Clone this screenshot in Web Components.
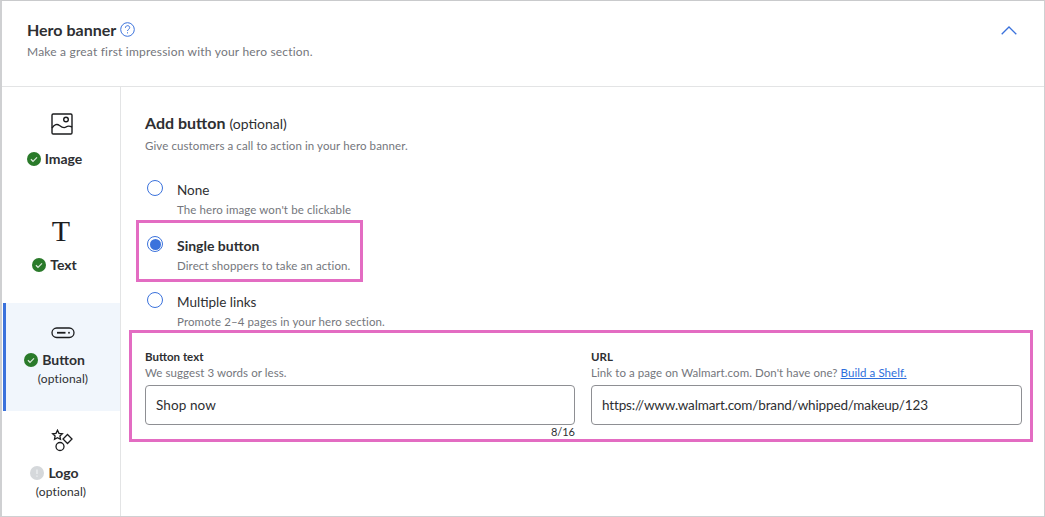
<!DOCTYPE html>
<html><head><meta charset="utf-8"><title>Hero banner</title>
<style>
html,body{margin:0;padding:0;background:#fff}
body{font-family:Lato,"Liberation Sans",sans-serif;color:#2e2f32}
</style></head><body>
<hero-panel>
  <side-tab slot="tabs" label="Image" status="ok" pt="21" gap="10" nudge="2" icon="image"></side-tab>
  <side-tab slot="tabs" label="Text" status="ok" pt="20" gap="9" nudge="4" icon="text"></side-tab>
  <side-tab slot="tabs" label="Button" sub="(optional)" status="ok" pt="14" gap="2" nudge="0" icon="button" active></side-tab>
  <side-tab slot="tabs" label="Logo" sub="(optional)" status="todo" pt="14" gap="7" nudge="2" subnudge="4" icon="logo"></side-tab>
  <radio-option label="None" hint="The hero image won't be clickable"></radio-option>
  <radio-option label="Single button" hint="Direct shoppers to take an action." checked></radio-option>
  <radio-option label="Multiple links" hint="Promote 2–4 pages in your hero section."></radio-option>
  <div slot="fields" style="display:contents">
    <text-field style="flex:0 0 430px" label="Button text" value="Shop now" count="8/16" track=".1">We suggest 3 words or less.</text-field>
    <text-field label="URL" value="https://www.walmart.com/brand/whipped/makeup/123" track="-.15">Link to a page on Walmart.com. Don't have one? <a href="#" style="color:#2e6fdc;text-decoration:underline">Build a Shelf.</a></text-field>
  </div>
</hero-panel>
<script>
const ICONS={
 image:'<svg width="22" height="22" viewBox="0 0 22 22" fill="none" stroke="#1b1c1e" stroke-width="1.4"><rect x="1" y="1" width="20" height="20" rx="1.2"/><path d="M1 15c2.500-3.500 5-4.500 7.500-2.500s4.500 3 6.500 1.500 4-1 6 0"/><circle cx="15" cy="6.500" r="2.300"/></svg>',
 text:'<span style="font:30px/32px \'Liberation Serif\',serif;color:#1b1c1e">T</span>',
 button:'<svg width="24" height="12" viewBox="0 0 24 12" fill="none" stroke="#1b1c1e" stroke-width="1.3"><rect x="1" y="1" width="22" height="9.500" rx="4.750"/><path d="M6 5.750h8.500" stroke-width="1.800"/><circle cx="18" cy="5.750" r=".9" fill="#1b1c1e" stroke="none"/></svg>',
 logo:'<svg width="22" height="24" viewBox="0 0 22 24" fill="none" stroke="#1b1c1e" stroke-width="1.3"><path d="M6.500 1.200l1.500 3.100 3.400.5-2.500 2.300.6 3.300-3-1.600-3 1.600.6-3.300L1.600 4.800 5 4.300z"/><path d="M16.500 5.500l4.500 4.500-4.500 4.500-4.500-4.500z"/><circle cx="9" cy="17.500" r="4"/></svg>'
};
function def(name,css,render){
  customElements.define(name,class extends HTMLElement{
    connectedCallback(){
      if(this.shadowRoot)return;
      const s=this.attachShadow({mode:'open'});
      s.innerHTML='<style>'+css+'</style>'+render(this);
    }
  });
}
const check='<svg width="14" height="14" viewBox="0 0 14 14" style="flex:none"><circle cx="7" cy="7" r="7" fill="#2a7a2a"/><path d="M3.900 7.300l2.100 2 4-4" fill="none" stroke="#dfe9df" stroke-width="1.200"/></svg>';
const todo='<svg width="14" height="14" viewBox="0 0 14 14" style="flex:none"><circle cx="7" cy="7" r="7" fill="#d5d8db"/><path d="M7 3.500v4.500M7 9.500v1.200" stroke="#eceef0" stroke-width="1.400"/></svg>';
def('side-tab',`
 :host{display:block;box-sizing:border-box;height:108px;border-left:3px solid transparent;margin-left:1px;text-align:center}
 :host([active]){border-left-color:#3b72dc;background:#f1f6fc}
 .in{display:flex;flex-direction:column;align-items:center}
 .ic{height:32px;display:flex;align-items:center;justify-content:center}
 .l{display:flex;align-items:center;justify-content:center;gap:4px;font-size:14px;font-weight:700;line-height:18px;color:#2e2f32;padding-right:17px}
 .s{font-size:12px;line-height:17px;color:#2e2f32;letter-spacing:.15px;margin-top:1px}
`,e=>`<div class="in" style="padding-top:${e.getAttribute('pt')}px"><div class="ic" style="margin-right:${e.getAttribute('nudge')}px">${ICONS[e.getAttribute('icon')]}</div><div class="l" style="margin-top:${e.getAttribute('gap')}px">${e.getAttribute('status')=='ok'?check:todo}<span>${e.getAttribute('label')}</span></div>${e.getAttribute('sub')?`<div class="s" style="margin-right:${e.getAttribute('subnudge')||0}px">${e.getAttribute('sub')}</div>`:''}</div>`);
def('radio-option',`
 :host{display:flex;height:56px;gap:14px;box-sizing:border-box}
 .r{flex:none;width:16px;height:16px;border-radius:50%;border:1.300px solid #3b72dc;box-sizing:border-box;display:flex;align-items:center;justify-content:center;background:#fff}
 .d{width:11px;height:11px;border-radius:50%;background:#3b72dc}
 .l{font-size:13.500px;line-height:20px;color:#2e2f32}
 :host([checked]) .l{font-size:14px;font-weight:700}
 .h{font-size:11.500px;line-height:16px;color:#74767c;margin-top:2px;letter-spacing:.11px}
`,e=>`<div class="r">${e.hasAttribute('checked')?'<div class="d"></div>':''}</div><div><div class="l">${e.getAttribute('label')}</div><div class="h">${e.getAttribute('hint')}</div></div>`);
def('text-field',`
 :host{display:block;flex:1 1 0;min-width:0}
 .l{font-size:11.500px;font-weight:700;line-height:15px;color:#2e2f32}
 .h{font-size:11.500px;line-height:15px;color:#74767c;letter-spacing:.07px;margin-top:1px}
 .i{box-sizing:border-box;height:40px;margin-top:5px;border:1px solid #8e8f93;border-radius:4px;padding:0 10px;display:flex;align-items:center;font-size:13.500px;color:#2e2f32}
 .c{font-size:11px;line-height:14px;text-align:right;color:#2e2f32;height:14px}
`,e=>`<div class="l">${e.getAttribute('label')}</div><div class="h"><slot></slot></div><div class="i" style="letter-spacing:${e.getAttribute('track')}px">${e.getAttribute('value')}</div><div class="c">${e.getAttribute('count')||''}</div>`);
def('hero-panel',`
 :host{display:block;position:relative;box-sizing:border-box;width:1045px;height:517px;overflow:hidden;border:1px solid #cfd0d2;border-left-width:2px;border-top-color:#c9cacc}
 header{box-sizing:border-box;height:86px;border-bottom:1px solid #e3e4e5;padding:19px 25px 0;display:flex;justify-content:space-between}
 h1{margin:0;font-size:16px;font-weight:700;line-height:20px;color:#2e2f32;display:flex;align-items:center;gap:4px}
 h1 svg{margin-top:-2px}
 .sub{font-size:12px;line-height:16px;color:#74767c;margin-top:4px;letter-spacing:.2px}
 .chev{margin:6px 2px 0 0}
 .body{display:flex;height:430px}
 nav{flex:none;width:118px;border-right:1px solid #e3e4e5}
 main{flex:1;min-width:0;padding:26px 22px 0 24px}
 h2{margin:0;font-size:16px;line-height:20px;font-weight:700;color:#2e2f32}
 h2 span{font-weight:400;font-size:14px}
 .d{font-size:11.500px;line-height:16px;color:#74767c;margin-top:4px;letter-spacing:.1px}
 .opts{margin-top:26px;padding-left:2px}
 .fields{display:flex;gap:16px;margin-top:1px}
 .pink{position:absolute;border:3px solid #e36cc2;box-sizing:border-box;pointer-events:none}
`,e=>`<header><div><h1>Hero banner <svg width="15" height="15" viewBox="0 0 15 15" fill="none" stroke="#3b72dc" stroke-width="1"><circle cx="7.500" cy="7.500" r="6.800"/><path d="M5.400 5.800c0-2.800 4.300-2.800 4.300-.2 0 1.700-2.200 1.700-2.200 3.400"/><path d="M7.500 10.300v1.100"/></svg></h1><div class="sub">Make a great first impression with your hero section.</div></div>
 <svg class="chev" width="16" height="9" viewBox="0 0 16 9" fill="none" stroke="#3b72dc" stroke-width="1.300"><path d="M.7 8.300L8 1l7.300 7.300"/></svg></header>
 <div class="body"><nav><slot name="tabs"></slot></nav><main><h2>Add button <span>(optional)</span></h2><div class="d">Give customers a call to action in your hero banner.</div><div class="opts"><slot></slot></div><div class="fields"><slot name="fields"></slot></div></main></div>
 <div class="pink" style="left:134px;top:219px;width:227px;height:62px"></div>
 <div class="pink" style="left:127px;top:329px;width:904px;height:112px"></div>`);
</script>
</body></html>
